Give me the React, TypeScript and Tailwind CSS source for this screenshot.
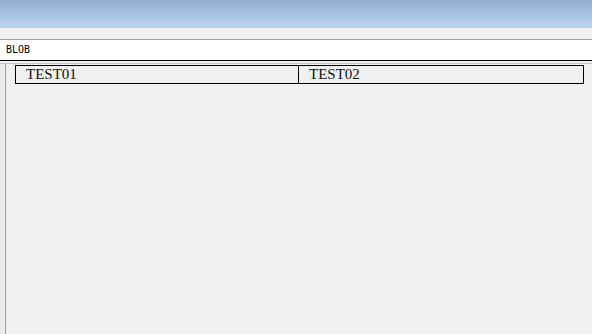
export default function App() {
  return (
    <div className="flex h-[334px] w-[592px] flex-col overflow-hidden bg-[#f0f0f0]">
      {/* title bar */}
      <div className="h-[28px] bg-gradient-to-b from-[#92b0d2] to-[#bcd4ee]" />
      <div className="h-[12px] border-b border-[#a0a0a0] bg-[#f0f0f0]" />
      {/* field row */}
      <div className="flex h-[21px] items-center border-b border-black bg-white pl-[6px] pb-[1px] text-[10px] text-black [font-family:'DejaVu_Sans_Mono',monospace]">
        BLOB
      </div>
      <div className="h-[3px] border-b border-[#c4c4c4]" />
      <div className="flex flex-1">
        <div className="w-[6px] border-r border-[#a0a0a0] bg-[#ececec]" />
        <div className="flex-1 pl-[9px] pt-[1px]">
          <div className="flex h-[19px] w-[569px] border border-black text-[15px] leading-[17px] text-[#111] [font-family:'Liberation_Serif',serif]">
            <div className="w-[283px] border-r border-black pl-[10px]">TEST01</div>
            <div className="flex-1 pl-[10px]">TEST02</div>
          </div>
        </div>
      </div>
    </div>
  );
}
